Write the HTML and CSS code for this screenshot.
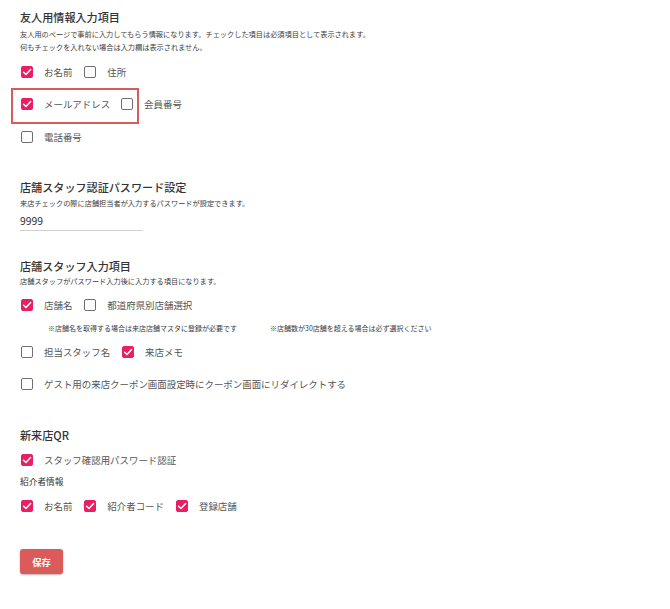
FILE: index.html
```html
<!DOCTYPE html>
<html lang="ja">
<head>
<meta charset="utf-8">
<title>設定</title>
<link rel="stylesheet" href="styles.css">
</head>
<body>
<div class="page">

  <section class="sec sec-friend">
    <h2 class="title">友人用情報入力項目</h2>
    <p class="desc">友人用のページで事前に入力してもらう情報になります。チェックした項目は必須項目として表示されます。<br>何もチェックを入れない場合は入力欄は表示されません。</p>

    <div class="row row-first">
      <label class="item"><span class="cb on"><svg viewBox="0 0 12 12"><path d="M2.6 6.2 L5 8.5 L9.6 3.6"/></svg></span><span class="lbl">お名前</span></label>
      <label class="item"><span class="cb"></span><span class="lbl">住所</span></label>
    </div>

    <div class="highlight">
      <div class="row">
        <label class="item"><span class="cb on"><svg viewBox="0 0 12 12"><path d="M2.6 6.2 L5 8.5 L9.6 3.6"/></svg></span><span class="lbl">メールアドレス</span></label>
        <label class="item"><span class="cb"></span><span class="lbl">会員番号</span></label>
      </div>
    </div>

    <div class="row row-tel">
      <label class="item"><span class="cb"></span><span class="lbl">電話番号</span></label>
    </div>
  </section>

  <section class="sec sec-pass">
    <h2 class="title">店舗スタッフ認証パスワード設定</h2>
    <p class="desc desc-tight">来店チェックの際に店舗担当者が入力するパスワードが設定できます。</p>
    <div class="field">9999</div>
  </section>

  <section class="sec sec-staff">
    <h2 class="title">店舗スタッフ入力項目</h2>
    <p class="desc desc-flush">店舗スタッフがパスワード入力後に入力する項目になります。</p>

    <div class="row row-shop">
      <label class="item"><span class="cb on"><svg viewBox="0 0 12 12"><path d="M2.6 6.2 L5 8.5 L9.6 3.6"/></svg></span><span class="lbl">店舗名</span></label>
      <label class="item"><span class="cb"></span><span class="lbl">都道府県別店舗選択</span></label>
    </div>
    <div class="notes">
      <span class="note note-a">※店舗名を取得する場合は来店店舗マスタに登録が必要です</span>
      <span class="note note-b">※店舗数が30店舗を超える場合は必ず選択ください</span>
    </div>
    <div class="row row-memo">
      <label class="item"><span class="cb"></span><span class="lbl">担当スタッフ名</span></label>
      <label class="item"><span class="cb on"><svg viewBox="0 0 12 12"><path d="M2.6 6.2 L5 8.5 L9.6 3.6"/></svg></span><span class="lbl">来店メモ</span></label>
    </div>
    <div class="row row-guest">
      <label class="item"><span class="cb"></span><span class="lbl">ゲスト用の来店クーポン画面設定時にクーポン画面にリダイレクトする</span></label>
    </div>
  </section>

  <section class="sec sec-qr">
    <h2 class="title">新来店QR</h2>
    <div class="row row-qr">
      <label class="item"><span class="cb on"><svg viewBox="0 0 12 12"><path d="M2.6 6.2 L5 8.5 L9.6 3.6"/></svg></span><span class="lbl">スタッフ確認用パスワード認証</span></label>
    </div>
    <h3 class="subtitle">紹介者情報</h3>
    <div class="row row-ref">
      <label class="item"><span class="cb on"><svg viewBox="0 0 12 12"><path d="M2.6 6.2 L5 8.5 L9.6 3.6"/></svg></span><span class="lbl">お名前</span></label>
      <label class="item"><span class="cb on"><svg viewBox="0 0 12 12"><path d="M2.6 6.2 L5 8.5 L9.6 3.6"/></svg></span><span class="lbl">紹介者コード</span></label>
      <label class="item"><span class="cb on"><svg viewBox="0 0 12 12"><path d="M2.6 6.2 L5 8.5 L9.6 3.6"/></svg></span><span class="lbl">登録店舗</span></label>
    </div>
  </section>

  <button class="save" type="button">保存</button>
</div>
</body>
</html>
```

FILE: styles.css
```css
html, body {
  margin: 0;
  padding: 0;
  background: #ffffff;
}

body {
  font-family: "Noto Sans CJK JP", "Noto Sans", sans-serif;
  color: #333333;
}

.page {
  padding: 9px 20px 30px 20px;
}

.sec {
  display: flex;
  flex-direction: column;
  align-items: flex-start;
}

.title {
  margin: 0;
  font-size: 11.1px;
  line-height: 17px;
  font-weight: 500;
  color: #333333;
}

.desc {
  margin: 1.5px 0 0 0;
  font-size: 7.2px;
  line-height: 13px;
  color: #3c3c3c;
}

.desc-tight { margin-top: 0.5px; }
.desc-flush { margin-top: 0; }

.row {
  display: flex;
  align-items: center;
  gap: 11px;
  height: 24px;
  white-space: nowrap;
}

.item {
  display: flex;
  align-items: center;
}

.cb {
  box-sizing: border-box;
  width: 12px;
  height: 12px;
  margin-left: 1px;
  margin-right: 11px;
  border: 1.4px solid #6e6e6e;
  border-radius: 2px;
  display: flex;
  align-items: center;
  justify-content: center;
  flex-shrink: 0;
}

.cb.on {
  background: #e91e63;
  border-color: #e91e63;
}

.cb svg {
  width: 12px;
  height: 12px;
  flex-shrink: 0;
}

.cb svg path {
  fill: none;
  stroke: #ffffff;
  stroke-width: 1.5;
  stroke-linecap: round;
  stroke-linejoin: round;
}

.lbl {
  font-size: 9.45px;
  line-height: 12px;
  color: #555555;
}

.row-first { margin-top: 6px; }

.highlight {
  box-sizing: border-box;
  width: 128px;
  margin: 4.5px 0 0 -9px;
  padding: 2px 0 6px 8px;
  border: 2px solid #d85c5c;
}

.highlight .row .cb { margin-left: 0; }

.row-tel { margin-top: 0.5px; }

.sec-pass { margin-top: 30.5px; }

.field {
  box-sizing: border-box;
  width: 123px;
  margin-top: 3px;
  height: 18.5px;
  font-size: 10.4px;
  line-height: 15px;
  color: #333333;
  border-bottom: 1px solid #cfcfcf;
}

.sec-staff { margin-top: 27px; }

.row-shop { margin-top: 5px; }

.notes {
  display: flex;
  margin-top: 5px;
  padding-left: 28px;
  height: 12px;
  align-items: center;
  white-space: nowrap;
}

.note {
  font-size: 7px;
  line-height: 12px;
  color: #3c3c3c;
}

.note-b { margin-left: 33px; }

.row-memo { margin-top: 5.5px; }
.row-guest { margin-top: 8.5px; }

.sec-qr { margin-top: 31px; }

.row-qr { margin-top: 4px; }

.subtitle {
  margin: 4px 0 0 0;
  font-size: 8.7px;
  line-height: 12px;
  font-weight: 400;
  color: #333333;
}

.row-ref { margin-top: 6px; }

.save {
  display: block;
  margin-top: 31px;
  width: 43px;
  height: 25px;
  padding: 0;
  border: none;
  border-radius: 3px;
  background: #db5a5a;
  color: #ffffff;
  font-family: "Noto Sans CJK JP", "Noto Sans", sans-serif;
  font-size: 9.3px;
  font-weight: 700;
  box-shadow: 0 1px 2px rgba(0, 0, 0, 0.3);
}
```
